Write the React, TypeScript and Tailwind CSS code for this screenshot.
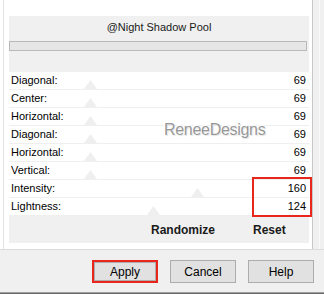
const rows = [
  { label: 'Diagonal:', value: '69', thumb: 75 },
  { label: 'Center:', value: '69', thumb: 75 },
  { label: 'Horizontal:', value: '69', thumb: 75 },
  { label: 'Diagonal:', value: '69', thumb: 75 },
  { label: 'Horizontal:', value: '69', thumb: 75 },
  { label: 'Vertical:', value: '69', thumb: 75 },
  { label: 'Intensity:', value: '160', thumb: 182 },
  { label: 'Lightness:', value: '124', thumb: 138 },
];

const Thumb = ({ left }: { left: number }) => (
  <svg
    width="13"
    height="9"
    viewBox="0 0 13 9"
    className="absolute top-[8px]"
    style={{ left }}
  >
    <path d="M6.5 0 L13 9 L0 9 Z" fill="#efefef" />
  </svg>
);

export default function App() {
  return (
    <div className="w-[324px] h-[294px] bg-white flex flex-col relative overflow-hidden font-['Liberation_Sans',Arial,sans-serif] text-[11px] text-black">
      <div className="flex h-[249px]">
        <div className="w-[3px]" />
        <div className="w-px bg-[#e3e3e3]" />
        <div className="w-[5px]" />

        {/* main panel */}
        <div className="w-[300px] flex flex-col">
          <div className="h-[16px]" />
          <div className="h-[56px] bg-[#f0f0f0] flex flex-col">
            <div className="h-[25px] pt-[5px] text-center text-[11px] leading-[13px] text-[#1a1a1a]">
              @Night Shadow Pool
            </div>
            <div className="h-[10px] mr-[2px] border border-[#b9b9b9] bg-[#e6e6e6]" />
          </div>

          {rows.map((r, i) => (
            <div
              key={i}
              className="relative h-[18px] bg-white border-b border-[#efefef] flex items-center justify-between pl-[2px] pr-[3px]"
            >
              <Thumb left={r.thumb} />
              <span className="relative">{r.label}</span>
              <span className="relative">{r.value}</span>
            </div>
          ))}

          <div className="h-[27px] bg-[#f0f0f0] flex items-center pl-[142px] gap-[38px] text-[12px] font-bold text-[#1a1a1a]">
            <span>Randomize</span>
            <span>Reset</span>
          </div>
          <div className="flex-1" />
        </div>

        <div className="w-[3px]" />
        <div className="w-px bg-[#c8c8c8]" />
        <div className="flex-1 bg-[#f0f0f0] flex">
          <div className="w-[6px]" />
          <div className="w-px bg-[#fafafa]" />
        </div>
      </div>

      <div className="h-px bg-[#dcdcdc]" />
      <div className="flex-1 bg-[#f0f0f0] flex justify-end items-start pt-[10px] pr-[10px] gap-[12px] text-[12px]">
        <div className="w-[66px] h-[23px] border-2 border-[#e8261c] flex">
          <div className="flex-1 bg-[#e1e1e1] border border-[#adadad] flex items-center justify-center">
            Apply
          </div>
        </div>
        <div className="w-[66px] h-[23px] bg-[#e1e1e1] border border-[#adadad] flex items-center justify-center">
          Cancel
        </div>
        <div className="w-[66px] h-[23px] bg-[#e1e1e1] border border-[#adadad] flex items-center justify-center">
          Help
        </div>
      </div>
      <div className="h-px bg-[#a0a0a0]" />
      <div className="h-px bg-[#696969]" />

      {/* watermark */}
      <div className="absolute left-[164px] top-[118px] text-[16px] tracking-[-0.3px] text-[#979797] [text-shadow:0_0_1px_#fff,-1px_-1px_0_#fff,1px_1px_1px_#e0e0e0]">
        ReneeDesigns
      </div>

      {/* red annotation box */}
      <div className="absolute left-[252px] top-[177px] w-[60px] h-[40px] border-2 border-[#e8261c]" />
    </div>
  );
}
